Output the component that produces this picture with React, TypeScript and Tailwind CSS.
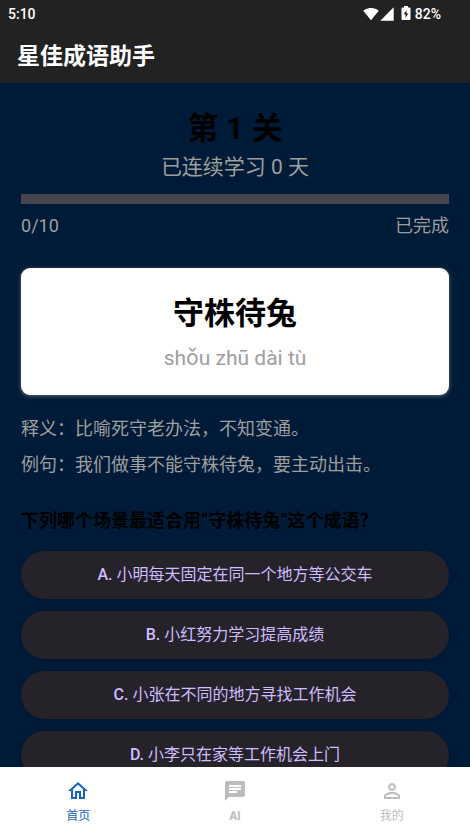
import { useState } from "react";
import { MdChat, MdOutlineHome, MdPersonOutline, MdSignalCellular4Bar, MdSignalWifi4Bar } from "react-icons/md";

const level = {
  number: 1,
  streak: 0,
  done: 0,
  total: 10,
};

const idiom = {
  word: "守株待兔",
  pinyin: "shǒu zhū dài tù",
  meaning: "比喻死守老办法，不知变通。",
  example: "我们做事不能守株待兔，要主动出击。",
};

const options = [
  { letter: "A.", text: "小明每天固定在同一个地方等公交车" },
  { letter: "B.", text: "小红努力学习提高成绩" },
  { letter: "C.", text: "小张在不同的地方寻找工作机会" },
  { letter: "D.", text: "小李只在家等工作机会上门" },
];

const tabs = [
  { id: "home", label: "首页", icon: MdOutlineHome, labelClass: "font-normal" },
  { id: "ai", label: "AI", icon: MdChat, labelClass: "font-bold" },
  { id: "me", label: "我的", icon: MdPersonOutline, labelClass: "font-normal" },
];

function BatteryIcon() {
  return (
    <svg viewBox="0 0 10 16" className="h-4 w-2.5" fill="currentColor" aria-hidden="true">
      <path
        fillRule="evenodd"
        d="M3 0h4v1.6h1.6c.5 0 .9.4.9.9v10.6c0 .5-.4.9-.9.9H1.4c-.5 0-.9-.4-.9-.9V2.500c0-.5.4-.9.9-.9H3zM5.500 4.200 2.600 8.300h1.900v3.500l2.900-4.300H5.500z"
      />
    </svg>
  );
}

function StatusBar() {
  return (
    <div className="flex h-7 items-center justify-between pr-[29px] pl-2 text-sm font-medium">
      <span>5:10</span>
      <div className="flex items-center">
        <MdSignalWifi4Bar className="size-4" />
        <MdSignalCellular4Bar className="size-4" />
        <span className="mr-1 ml-1.5">
          <BatteryIcon />
        </span>
        <span>82%</span>
      </div>
    </div>
  );
}

function LevelHeader() {
  return (
    <section>
      <h2 className="text-center text-[31px] leading-9 font-bold text-black">第 {level.number} 关</h2>
      <p className="mt-1 text-center text-[21px] leading-8">已连续学习 {level.streak} 天</p>
      <div
        role="progressbar"
        aria-label="已完成"
        aria-valuenow={level.done}
        aria-valuemax={level.total}
        className="mt-[11px] h-2.5 bg-[#49454f]"
      >
        <div className="h-full bg-[#d0bcff]" style={{ width: `${(level.done / level.total) * 100}%` }} />
      </div>
      <div className="mt-2 flex justify-between text-lg">
        <span>
          {level.done}/{level.total}
        </span>
        <span>已完成</span>
      </div>
    </section>
  );
}

export default function App() {
  const [activeTab, setActiveTab] = useState("home");

  return (
    <div className="flex h-screen flex-col bg-[#001b37] font-['Roboto','Noto_Sans_CJK_SC',sans-serif]" lang="zh-CN">
      <header className="shrink-0 bg-[#222222] text-white">
        <StatusBar />
        <h1 className="px-[17px] pt-[11px] pb-2 text-[23px] leading-9 font-bold">星佳成语助手</h1>
      </header>

      <main className="min-h-0 flex-1 overflow-y-auto px-[21px] pt-7 pb-6 text-[#9e9e9e] [scrollbar-width:none]">
        <LevelHeader />

        <section className="mt-7 rounded-[9px] bg-white pt-7 pb-[19px] text-center shadow-[0_1px_4px_rgba(255,255,255,0.35)]">
          <h3 className="text-[31px] leading-9 font-bold text-black">{idiom.word}</h3>
          <p className="mt-2 text-[21px] leading-9">{idiom.pinyin}</p>
        </section>

        <section className="mt-4 text-lg leading-9">
          <p>释义：{idiom.meaning}</p>
          <p>例句：{idiom.example}</p>
        </section>

        <h3 className="mt-6 text-lg font-bold text-black">下列哪个场景最适合用“守株待兔”这个成语？</h3>
        <div className="mt-4 flex flex-col gap-3">
          {options.map((option) => (
            <button
              key={option.letter}
              type="button"
              className="h-12 rounded-full bg-[#252329] text-base text-[#d0bcff] shadow-sm"
            >
              <span className="font-medium">{option.letter}</span> {option.text}
            </button>
          ))}
        </div>
      </main>

      <nav className="flex shrink-0 bg-white">
        {tabs.map(({ id, label, icon: Icon, labelClass }) => (
          <button
            key={id}
            type="button"
            onClick={() => setActiveTab(id)}
            className={`flex flex-1 flex-col items-center gap-[5px] pt-3 pb-[11px] text-xs leading-[17px] ${labelClass} ${
              activeTab === id ? "text-[#1565c0]" : "text-[#bdbdbd]"
            }`}
          >
            <Icon className="size-6" />
            {label}
          </button>
        ))}
      </nav>
    </div>
  );
}
